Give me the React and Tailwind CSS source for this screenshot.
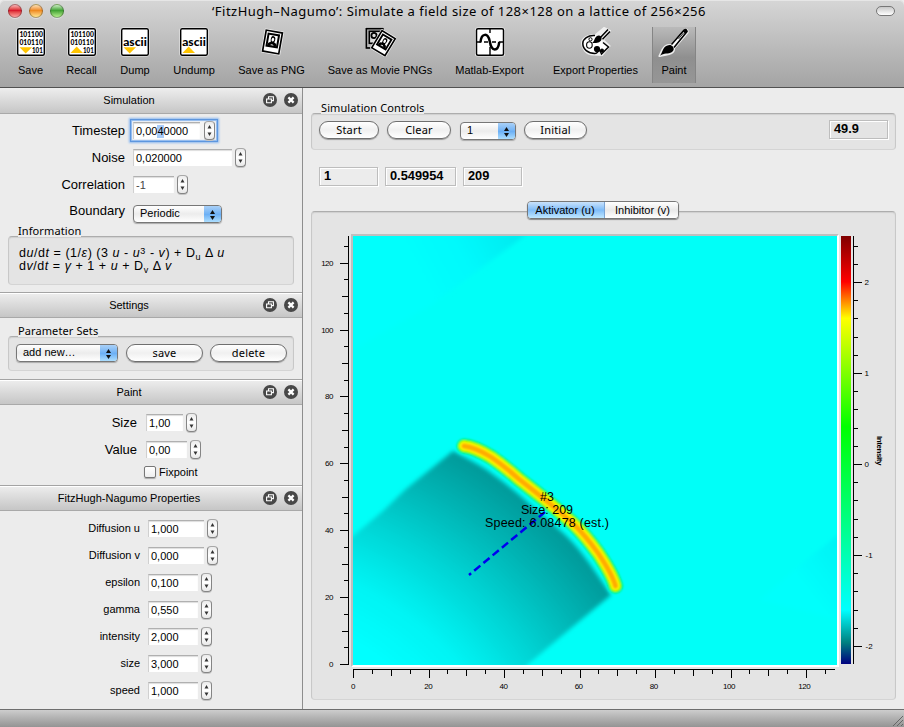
import React from "react";

const lucida = "font-['Noto_Sans','Open_Sans',sans-serif]";

function Spinner() {
  return (
    <span className="flex h-[19px] w-[11px] shrink-0 flex-col items-center justify-between rounded-[4px] border border-x-[#858585] border-t-[#a8a8a8] border-b-[#858585] bg-linear-to-b from-[#ececec] via-white to-[#e8e8e8] py-[3px] shadow-[0_1px_0_#c4c4c4]">
      <svg width="5" height="4" viewBox="0 0 5 4"><path d="M2.5 0L4.5 3.5H.5z" fill="#333" /></svg>
      <svg width="5" height="4" viewBox="0 0 5 4"><path d="M2.5 4L4.5 .5H.5z" fill="#333" /></svg>
    </span>
  );
}

function Input({ width, children }) {
  return (
    <span
      className="flex h-[17px] shrink-0 items-center border-t border-l border-t-[#b0b0b0] border-l-[#d0d0d0] bg-white pl-[2px] text-[11px] leading-none whitespace-nowrap shadow-[inset_0_1px_1px_#ddd]"
      style={{ width }}
    >
      {children}
    </span>
  );
}

function Combo({ width, children }) {
  return (
    <span
      className="flex h-[18px] shrink-0 overflow-hidden rounded-[4px] border border-[#777] bg-linear-to-b from-white via-[#ececec] to-white text-[11px] leading-[14px] shadow-[0_1px_1px_#aaa]"
      style={{ width }}
    >
      <span className="flex-1 pl-[6px]">{children}</span>
      <span className="-my-px -mr-px flex w-[18px] flex-col items-center justify-center gap-[2px] border-t border-r border-t-[#2b2ba0] border-r-[#3a4bb0] bg-linear-to-b from-[#a9d0f7] via-[#6cb0f5] to-[#b5e4ff]">
        <svg width="5" height="4" viewBox="0 0 5 4"><path d="M2.5 0L5 4H0z" fill="#111" /></svg>
        <svg width="5" height="4" viewBox="0 0 5 4"><path d="M2.5 4L5 0H0z" fill="#111" /></svg>
      </span>
    </span>
  );
}

function Button({ width, children }) {
  return (
    <button
      className={`flex h-[18px] shrink-0 items-center justify-center rounded-full border border-[#6f6f6f] bg-linear-to-b from-white via-[#f0f0f0] to-white pb-[2px] text-[11px] leading-none tracking-[0.2px] shadow-[0_1px_1px_#999] ${lucida}`}
      style={{ width }}
    >
      {children}
    </button>
  );
}

function DockHeader({ title, first }) {
  return (
    <div className={`flex shrink-0 items-center border-b border-[#a9a9a9] bg-linear-to-b from-[#eeeeee] to-[#c6c6c6] pr-[4px] text-[11px] ${first ? "h-[26px] pb-px" : "h-[25px] shadow-[inset_0_1px_0_#fff]"}`}>
      <span className="flex-1 pr-[5px] text-center">{title}</span>
      <span className="flex w-[35px] shrink-0 justify-between">
        <svg width="14" height="14" viewBox="0 0 14 14">
          <circle cx="7" cy="7" r="7" fill="#484848" />
          <path d="M5.5 5.5V3.8H10.4V7.6H9M3.6 6H8.4V9.8H3.6z" fill="none" stroke="#fff" strokeWidth="1.1" />
        </svg>
        <svg width="14" height="14" viewBox="0 0 14 14">
          <circle cx="7" cy="7" r="7" fill="#484848" />
          <path d="M4.4 4.4L9.6 9.6M9.6 4.4L4.4 9.6" stroke="#fff" strokeWidth="2.2" />
        </svg>
      </span>
    </div>
  );
}

function Group({ title, className, children }) {
  return (
    <div className="flex flex-col">
      <div className={`z-10 ml-[10px] -mb-px h-[13px] self-start bg-[#ececec] text-[11px] leading-[13px] tracking-[0.1px] whitespace-nowrap ${lucida}`}>
        {title}
      </div>
      <div className={`rounded-[4px] border border-t-[#adadad] border-r-[#c8c8c8] border-b-[#d4d4d4] border-l-[#c8c8c8] bg-[#e4e4e4] shadow-[inset_0_1px_1px_#cfcfcf] ${className}`}>
        {children}
      </div>
    </div>
  );
}

function Row({ label, labelClass, children }) {
  return (
    <div className="flex h-[27px] items-center">
      <span className={`shrink-0 text-right ${labelClass}`}>{label}</span>
      {children}
    </div>
  );
}

const properties = [
  ["Diffusion u", "1,000", 56],
  ["Diffusion v", "0,000", 56],
  ["epsilon", "0,100", 50],
  ["gamma", "0,550", 50],
  ["intensity", "2,000", 50],
  ["size", "3,000", 50],
  ["speed", "1,000", 50],
];

function Sidebar() {
  const formLabel = "w-[125px] text-[13px]";
  const paintLabel = "w-[137px] text-[13px]";
  return (
    <aside className="flex w-[302px] shrink-0 flex-col">
      <section className="h-[204px]">
        <DockHeader title="Simulation" first />
        <div className="pt-[3px]">
          <Row label="Timestep" labelClass={formLabel}>
            <span className="ml-[6px] flex h-[21px] w-[86px] items-center justify-between bg-[#f4f4f4] pr-[2px] pl-[2px] shadow-[0_0_0_1px_#5d96de,0_0_2px_2px_#8db9ef,inset_0_0_1px_1px_#8db9ef]">
              <Input width={67}>0,00<span className="bg-[#a9cbf7] py-px">4</span>0000</Input>
              <Spinner />
            </span>
          </Row>
          <Row label="Noise" labelClass={formLabel}>
            <span className="flex items-center gap-[3px] pl-[8px]"><Input width={99}>0,020000</Input><Spinner /></span>
          </Row>
          <Row label="Correlation" labelClass={formLabel}>
            <span className="flex items-center gap-[3px] pl-[8px]"><Input width={41}><span className="text-[#444]">-1</span></Input><Spinner /></span>
          </Row>
          <div className="flex h-[28px] items-start">
            <span className={`shrink-0 pt-[4px] text-right leading-[18px] ${formLabel}`}>Boundary</span>
            <span className="pt-[7px] pl-[8px]"><Combo width={89}>Periodic</Combo></span>
          </div>
        </div>
        <div className="-mt-[2px] px-[8px]">
          <Group title="Information" className="h-[49px] px-[10px] pt-[10px] text-[12.5px] leading-[13px] tracking-[0.54px] whitespace-nowrap">
            <div>d<i>u</i>/d<i>t</i> = (1/<i>ε</i>) (3 <i>u</i> - <i>u</i><span className="relative -top-[3px] text-[9px] leading-none">3</span> - <i>v</i>) + D<span className="relative top-[3px] text-[9px] leading-none">u</span> Δ <i>u</i></div>
            <div>d<i>v</i>/d<i>t</i> = <i>γ</i> + 1 + <i>u</i> + D<span className="relative top-[3px] text-[9px] leading-none">v</span> Δ <i>v</i></div>
          </Group>
        </div>
      </section>

      <section className="h-[87px] border-t border-[#a4a4a4]">
        <DockHeader title="Settings" />
        <div className="px-[8px] pt-[6px]">
          <Group title="Parameter Sets" className="flex h-[35px] items-center px-[7px] pb-px">
            <Combo width={102}>add new…</Combo>
            <span className="ml-[8px] flex gap-[7px]">
              <Button width={77}>save</Button>
              <Button width={77}>delete</Button>
            </span>
          </Group>
        </div>
      </section>

      <section className="h-[106px] border-t border-[#a4a4a4]">
        <DockHeader title="Paint" />
        <div className="pt-[4px]">
          <Row label="Size" labelClass={paintLabel}>
            <span className="flex items-center gap-[3px] pl-[9px]"><Input width={37}>1,00</Input><Spinner /></span>
          </Row>
          <Row label="Value" labelClass={paintLabel}>
            <span className="flex items-center gap-[3px] pl-[9px]"><Input width={41}>0,00</Input><Spinner /></span>
          </Row>
          <label className="flex h-[18px] items-center gap-[3px] pl-[144px] text-[11px]">
            <span className="h-[12px] w-[12px] rounded-[2px] border border-[#777] bg-linear-to-b from-white to-[#eee] shadow-[0_1px_1px_#aaa]" />
            Fixpoint
          </label>
        </div>
      </section>

      <section className="h-[224px] border-t border-[#a4a4a4]">
        <DockHeader title="FitzHugh-Nagumo Properties" />
        <div className="pt-[4px]">
          {properties.map(([name, value, width]) => (
            <Row key={name} label={name} labelClass="w-[140px] text-[11px] pb-px">
              <span className="flex items-center gap-[3px] pl-[8px]"><Input width={width}>{value}</Input><Spinner /></span>
            </Row>
          ))}
        </div>
      </section>
    </aside>
  );
}

function CodeIcon({ lines, up }) {
  return (
    <svg width="30" height="30" viewBox="0 0 30 30">
      <rect x=".5" y=".5" width="29" height="29" rx="2.5" fill="#eee" />
      <rect x="1.7" y="1.7" width="26.6" height="26.6" rx="1.5" fill="#fff" stroke="#000" strokeWidth="1.4" />
      <g fontFamily="Lato, 'Liberation Sans', sans-serif" fontWeight="900" fill="#000">
        {lines ? (
          <g fontSize="8">
            <text x="3.4" y="9.6" textLength="23.4" lengthAdjust="spacingAndGlyphs">101100</text>
            <text x="3.4" y="17.7" textLength="23.4" lengthAdjust="spacingAndGlyphs">010110</text>
            <text x="16" y="26" textLength="10.8" lengthAdjust="spacingAndGlyphs">101</text>
          </g>
        ) : (
          <text x="3.2" y="19.4" fontSize="11" textLength="23.6" lengthAdjust="spacingAndGlyphs">ascii</text>
        )}
      </g>
      {up ? <path d="M3.5 26L9.7 19.4L16 26z" fill="#ffc400" /> : <path d="M3.5 20.3L9.7 26.5L16 20.3z" fill="#ffc400" />}
    </svg>
  );
}

function Photo() {
  return (
    <g>
      <rect x="-9.8" y="-12.2" width="19.6" height="24.4" rx="1" fill="#eee" />
      <rect x="-8.2" y="-10.6" width="16.4" height="21.2" fill="#fff" stroke="#000" strokeWidth="1.7" />
      <rect x="-5.3" y="-7.6" width="10.6" height="12.2" fill="#fff" stroke="#000" strokeWidth="2" />
      <path d="M-4.6 4Q-4.6 .6 -1.8 .2Q-3.2 -6 .2 -6Q3.4 -5.6 1.8 .2Q4.6 .8 4.6 4z" fill="#000" />
      <ellipse cx="0" cy="-2.4" rx="1.3" ry="1.9" fill="#fff" />
      <path d="M-1.8 3.4Q0 1 1.8 3.4z" fill="#fff" />
    </g>
  );
}

const icons = {
  photo: <svg width="30" height="30" viewBox="0 0 30 30"><g transform="translate(15.5 15) rotate(10)"><Photo /></g></svg>,
  movie: (
    <svg width="32" height="30" viewBox="0 0 32 30">
      <rect x="1" y="0" width="19" height="22" fill="#eee" />
      <rect x="2.3" y="1.6" width="16.6" height="19.4" fill="#bbb" stroke="#000" strokeWidth="1.7" />
      <rect x="5.3" y="4.3" width="11" height="12" fill="#ddd" stroke="#000" strokeWidth="1.6" />
      <circle cx="10" cy="8.5" r="2.6" fill="none" stroke="#000" strokeWidth="1.8" />
      <g transform="translate(19.5 16.2) rotate(31) scale(.94)"><Photo /></g>
    </svg>
  ),
  wave: (
    <svg width="30" height="30" viewBox="0 0 30 30">
      <rect x="0" y=".5" width="30" height="29" rx="2.5" fill="#eee" />
      <rect x="1.5" y="1.7" width="27" height="26.6" rx="1.5" fill="#fff" stroke="#000" strokeWidth="1.5" />
      <path d="M15 2V6M15 20V28M2 15H6M9 15H13M17 15H21M24 15H28" stroke="#000" strokeWidth="1.4" />
      <path d="M5.5 15.5C6.3 5.5 13 5.5 14.8 14.5C16.5 25 23 25 24.3 14.8" fill="none" stroke="#000" strokeWidth="2.5" />
    </svg>
  ),
  palette: (
    <svg width="32" height="30" viewBox="0 0 32 30">
      <path d="M2 16C2 11 9 7.5 15 8.5L24 1L30 4L23 13L29.5 19L22 28L14 27.5C6 28 2 21 2 16z" fill="#eee" stroke="#eee" strokeWidth="2" strokeLinejoin="round" />
      <path d="M15 8.6C8 8 2.8 12 2.8 16.5C2.8 22 8 26.5 15 26.4C18 26.4 17.5 23.5 20 23.5L21.5 27L28.5 20L23 15.5" fill="#fff" stroke="#000" strokeWidth="1.5" />
      <ellipse cx="9.4" cy="18" rx="2.8" ry="3.2" fill="#fff" stroke="#000" strokeWidth="1.1" />
      <circle cx="10.5" cy="12.3" r="1.6" fill="none" stroke="#000" />
      <circle cx="17" cy="22" r="3.1" fill="#000" />
      <circle cx="22" cy="23.5" r="2" fill="#000" />
      <path d="M12 15.8C15 14.6 13.5 11.5 17 9C19.5 7.3 22 9.5 21.5 12C20.8 16 16 16.5 12 15.8z" fill="#000" />
      <path d="M20 11L28 2.5M22.5 12.2L30 4.5" stroke="#000" strokeWidth="1.5" />
    </svg>
  ),
  brush: (
    <svg width="32" height="30" viewBox="0 0 32 30">
      <path d="M1.5 29C4 25 4 21 8 19C10 17.7 12 18 13 18.5L26 3.5Q30 1.5 29.5 5.5L16 21C16.5 28 8 27 1.5 29z" fill="#eee" stroke="#eee" strokeWidth="2.2" strokeLinejoin="round" />
      <path d="M13.5 17.5L26 3.2Q28.6 1.4 29 4.6L16 20.4" fill="#fff" stroke="#000" strokeWidth="1.6" />
      <path d="M25 4.5Q28.5 .8 29.4 4.4L27.3 7z" fill="#000" />
      <path d="M20.5 12L25.5 6" stroke="#000" strokeWidth=".8" />
      <path d="M2 28.7C5 25 4.5 20.5 8.8 18.8C12 17.4 13.3 18.2 14.8 19.6C16.3 21.4 16 23.8 14 25C10 27.3 6 25.7 2 28.7z" fill="#000" />
    </svg>
  ),
};

const tools = [
  ["Save", <CodeIcon lines />, "w-[51px]"],
  ["Recall", <CodeIcon lines up />, "w-[51px]"],
  ["Dump", <CodeIcon />, "w-[56px]"],
  ["Undump", <CodeIcon up />, "w-[62px]"],
  ["Save as PNG", icons.photo, "w-[93px]"],
  ["Save as Movie PNGs", icons.movie, "w-[124px]"],
  ["Matlab-Export", icons.wave, "w-[95px]"],
  ["Export Properties", icons.palette, "ml-[2px] w-[113px]"],
  ["Paint", icons.brush, "w-[44px] border-x border-[#858585] bg-linear-to-b from-[#bababa] via-[#8f8f8f] via-55% to-[#969696]"],
];

function Toolbar() {
  const light = "h-[14px] w-[14px] rounded-full border border-black/30 shadow-[0_1px_0_rgba(255,255,255,0.4)]";
  return (
    <header className="flex h-[88px] shrink-0 flex-col rounded-t-[5px] border-b border-[#515151] bg-linear-to-b from-[#d6d6d6] to-[#a4a4a4] shadow-[inset_0_1px_0_#e6e6e6]">
      <div className="flex h-[22px] items-center pr-[9px] pl-[8px]">
        <div className="flex w-[56px] shrink-0 gap-[7px]">
          <span className={`bg-linear-to-b from-[#f7b3b8] via-[#d8142c] via-45% to-[#ffa0a0] ${light}`} />
          <span className={`bg-linear-to-b from-[#fbe0b0] via-[#ee8a1c] via-45% to-[#ffe78c] ${light}`} />
          <span className={`bg-linear-to-b from-[#c9efc0] via-[#3fa232] via-45% to-[#b4f08c] ${light}`} />
        </div>
        <h1 className={`flex-1 pr-[22px] text-center text-[13px] leading-[20px] tracking-[0.47px] whitespace-nowrap ${lucida}`}>
          ‘FitzHugh–Nagumo’: Simulate a field size of 128×128 on a lattice of 256×256
        </h1>
        <span className="h-[10px] w-[19px] shrink-0 rounded-full border border-[#777] bg-linear-to-b from-[#c8c8c8] to-white" />
      </div>
      <nav className="flex pt-[5px] pl-[5px]">
        {tools.map(([name, icon, cls]) => (
          <div key={name} className={`flex h-[56px] flex-col items-center ${cls}`}>
            {icon}
            <span className="mt-[5px] text-[11px] leading-[16px] whitespace-nowrap">{name}</span>
          </div>
        ))}
      </nav>
    </header>
  );
}

function Readout({ width, children }) {
  return (
    <span
      className="flex h-[19px] shrink-0 items-center border border-[#bdbdbd] pb-px pl-[4px] text-[12.8px] leading-none font-bold shadow-[1px_1px_0_#fff,inset_1px_1px_0_#fff]"
      style={{ width }}
    >
      {children}
    </span>
  );
}

const front = "M464 446C472 447 482 451.500 491 457C502 464.500 511 472 520 480L543 498C554 507 564 515 573 523.500C583 533 590 542 598 553C606 565 613 576 615.500 586";
const wedge = "M453 451C466 458 476 463 487 470C498 478 507 485 517 493L547 519C557 528 565 534 573 543C581 552 587 560 594 570L611 595L573 626.500L527 665L500 710L300 710V580L353 536L383 511L406 489z";

const tick = (i) => (i % 20 === 0 ? 8 : i % 10 === 0 ? 6 : 4);
const fives = Array.from({ length: 26 }, (_, i) => i * 5);
const fifths = Array.from({ length: 23 }, (_, i) => i - 10);

function Plot() {
  return (
    <svg width="583" height="476" viewBox="312 223 583 476" fontFamily="'Liberation Sans', sans-serif">
      <defs>
        <radialGradient id="wake" gradientUnits="userSpaceOnUse" cx="219" cy="871" r="482">
          <stop offset=".55" stopColor="#00ffff" />
          <stop offset=".66" stopColor="#00f4f4" />
          <stop offset=".78" stopColor="#00d6d6" />
          <stop offset=".9" stopColor="#00b4b4" />
          <stop offset="1" stopColor="#009999" />
        </radialGradient>
        <linearGradient id="echo" gradientUnits="userSpaceOnUse" x1="527" y1="236" x2="425" y2="290">
          <stop offset="0" stopColor="#00e9ee" />
          <stop offset=".55" stopColor="#00f9fc" />
          <stop offset="1" stopColor="#00fffc" />
        </linearGradient>
        <linearGradient id="echoRight" gradientUnits="userSpaceOnUse" x1="840" y1="540" x2="795" y2="575">
          <stop offset="0" stopColor="#00f2f5" />
          <stop offset="1" stopColor="#00fffc" />
        </linearGradient>
        <linearGradient id="scale" x1="0" y1="0" x2="0" y2="1">
          <stop offset="0" stopColor="#800000" />
          <stop offset=".107" stopColor="#ff0000" />
          <stop offset=".192" stopColor="#ffff00" />
          <stop offset=".446" stopColor="#00ff00" />
          <stop offset=".874" stopColor="#00ffff" />
          <stop offset=".95" stopColor="#008080" />
          <stop offset="1" stopColor="#000080" />
        </linearGradient>
        <filter id="soft" x="-10%" y="-10%" width="120%" height="120%"><feGaussianBlur stdDeviation="2" /></filter>
        <filter id="edge" x="-10%" y="-10%" width="120%" height="120%"><feGaussianBlur stdDeviation=".8" /></filter>
        <clipPath id="field"><rect x="353" y="236" width="484" height="429" /></clipPath>
      </defs>

      <rect x="351" y="234" width="488" height="433" fill="#fff" />
      <path d="M351 667V234H839L837 236H353V665z" fill="#bfbfbf" />
      <g clipPath="url(#field)">
        <rect x="353" y="236" width="484" height="429" fill="#00fff8" />
        <path d="M527 234L430 306L353 350V234z" fill="url(#echo)" filter="url(#soft)" />
        <path d="M839 534L800 565L760 600L839 620z" fill="url(#echoRight)" filter="url(#soft)" />
        <path d={wedge} fill="url(#wake)" filter="url(#soft)" />
        <g fill="none" strokeLinecap="round" filter="url(#edge)">
          <path d={front} stroke="#00fff0" strokeWidth="17" />
          <path d={front} stroke="#00f400" strokeWidth="14.500" />
          <path d={front} stroke="#ffff00" strokeWidth="10" />
          <path d={front} stroke="#ffac00" strokeWidth="5.500" />
        </g>
        <path d="M545 512L469 575" stroke="#0000f0" strokeWidth="2.500" strokeDasharray="8 4" />
        <g fontSize="12.500" textAnchor="middle" fill="#000">
          <text x="547" y="501">#3</text>
          <text x="547" y="514">Size: 209</text>
          <text x="547" y="527" textLength="124">Speed: 6.08478 (est.)</text>
        </g>
      </g>

      <rect x="841" y="236" width="10" height="428" fill="url(#scale)" />

      <g fill="#000" shapeRendering="crispEdges">
        <rect x="348" y="236" width="1" height="429" />
        <rect x="353" y="669" width="482" height="1" />
        <rect x="853" y="236" width="1" height="428" />
        {fives.map((v) => (
          <g key={v}>
            <rect x={348 - tick(v)} y={Math.round(664 - v * 3.345)} width={tick(v)} height="1" />
            <rect x={Math.round(353 + v * 3.776)} y="670" width="1" height={tick(v)} />
          </g>
        ))}
        {fifths.map((v) => (
          <rect key={v} x="854" y={Math.round(464 - v * 18.2)} width={v % 5 === 0 ? 8 : 4} height="1" />
        ))}
      </g>

      <g fontSize="8" fill="#000" letterSpacing="-.5">
        {[0, 20, 40, 60, 80, 100, 120].map((v) => (
          <g key={v}>
            <text x="333" y={667 - v * 3.345} textAnchor="end">{v}</text>
            <text x={353 + v * 3.76} y="689" textAnchor="middle">{v}</text>
          </g>
        ))}
        {[2, 1, 0, -1, -2].map((v) => (
          <text key={v} x={v < 0 ? 865.5 : 864.5} y={467 - v * 91} letterSpacing="0">{v}</text>
        ))}
        <text transform="translate(877 436) rotate(90)" fontWeight="bold" textLength="29">Intensity</text>
      </g>
    </svg>
  );
}

function Main() {
  return (
    <main className="flex flex-1 flex-col border-l border-[#8e8e8e] pt-[13px] pr-[8px] pl-[8px]">
      <Group title="Simulation Controls" className="flex h-[37px] items-center px-[7px] pb-[3px]">
        <Button width={60}>Start</Button>
        <span className="ml-[8px]"><Button width={64}>Clear</Button></span>
        <span className="mt-[2px] ml-[9px]"><Combo width={56}>1</Combo></span>
        <span className="ml-[8px]"><Button width={63}>Initial</Button></span>
        <span className="mb-px ml-auto"><Readout width={59}>49.9</Readout></span>
      </Group>
      <div className="mt-[17px] flex pl-[8px]">
        <Readout width={59}>1</Readout>
        <span className="ml-[7px]"><Readout width={71}>0.549954</Readout></span>
        <span className="ml-[7px]"><Readout width={59}>209</Readout></span>
      </div>
      <div className="z-10 mt-[15px] mr-px flex h-[18px] w-[152px] self-center overflow-hidden rounded-[4px] border border-[#777] text-[11px] leading-[16px] whitespace-nowrap shadow-[0_1px_1px_#888]">
        <span className="w-[77px] border-r border-[#7ba5d5] bg-linear-to-b from-[#c9e2fb] via-[#7fbcf8] to-[#c0e8ff] pr-[2px] text-center">Aktivator (u)</span>
        <span className="flex-1 bg-linear-to-b from-white via-[#e9e9e9] to-white pl-[2px] text-center">Inhibitor (v)</span>
      </div>
      <div className="-mt-[8px] h-[489px] rounded-[4px] border border-t-[#adadad] border-r-[#c8c8c8] border-b-[#d4d4d4] border-l-[#c8c8c8] bg-[#e4e4e4] pt-[11px] shadow-[inset_0_1px_1px_#cfcfcf]">
        <Plot />
      </div>
    </main>
  );
}

export default function App() {
  return (
    <div className="flex h-[727px] w-[904px] flex-col overflow-hidden bg-[#ececec] font-['Liberation_Sans',Arial,sans-serif] text-black">
      <Toolbar />
      <div className="flex h-[621px] shrink-0">
        <Sidebar />
        <Main />
      </div>
      <footer className="flex h-[18px] items-end justify-end border-t border-[#6e6e6e] bg-linear-to-b from-[#cdcdcd] to-[#949494]">
        <svg width="13" height="13" viewBox="0 0 13 13">
          <path d="M2 12L12 2M6 12L12 6M10 12L12 10" stroke="#666" strokeWidth="1" />
        </svg>
      </footer>
    </div>
  );
}
